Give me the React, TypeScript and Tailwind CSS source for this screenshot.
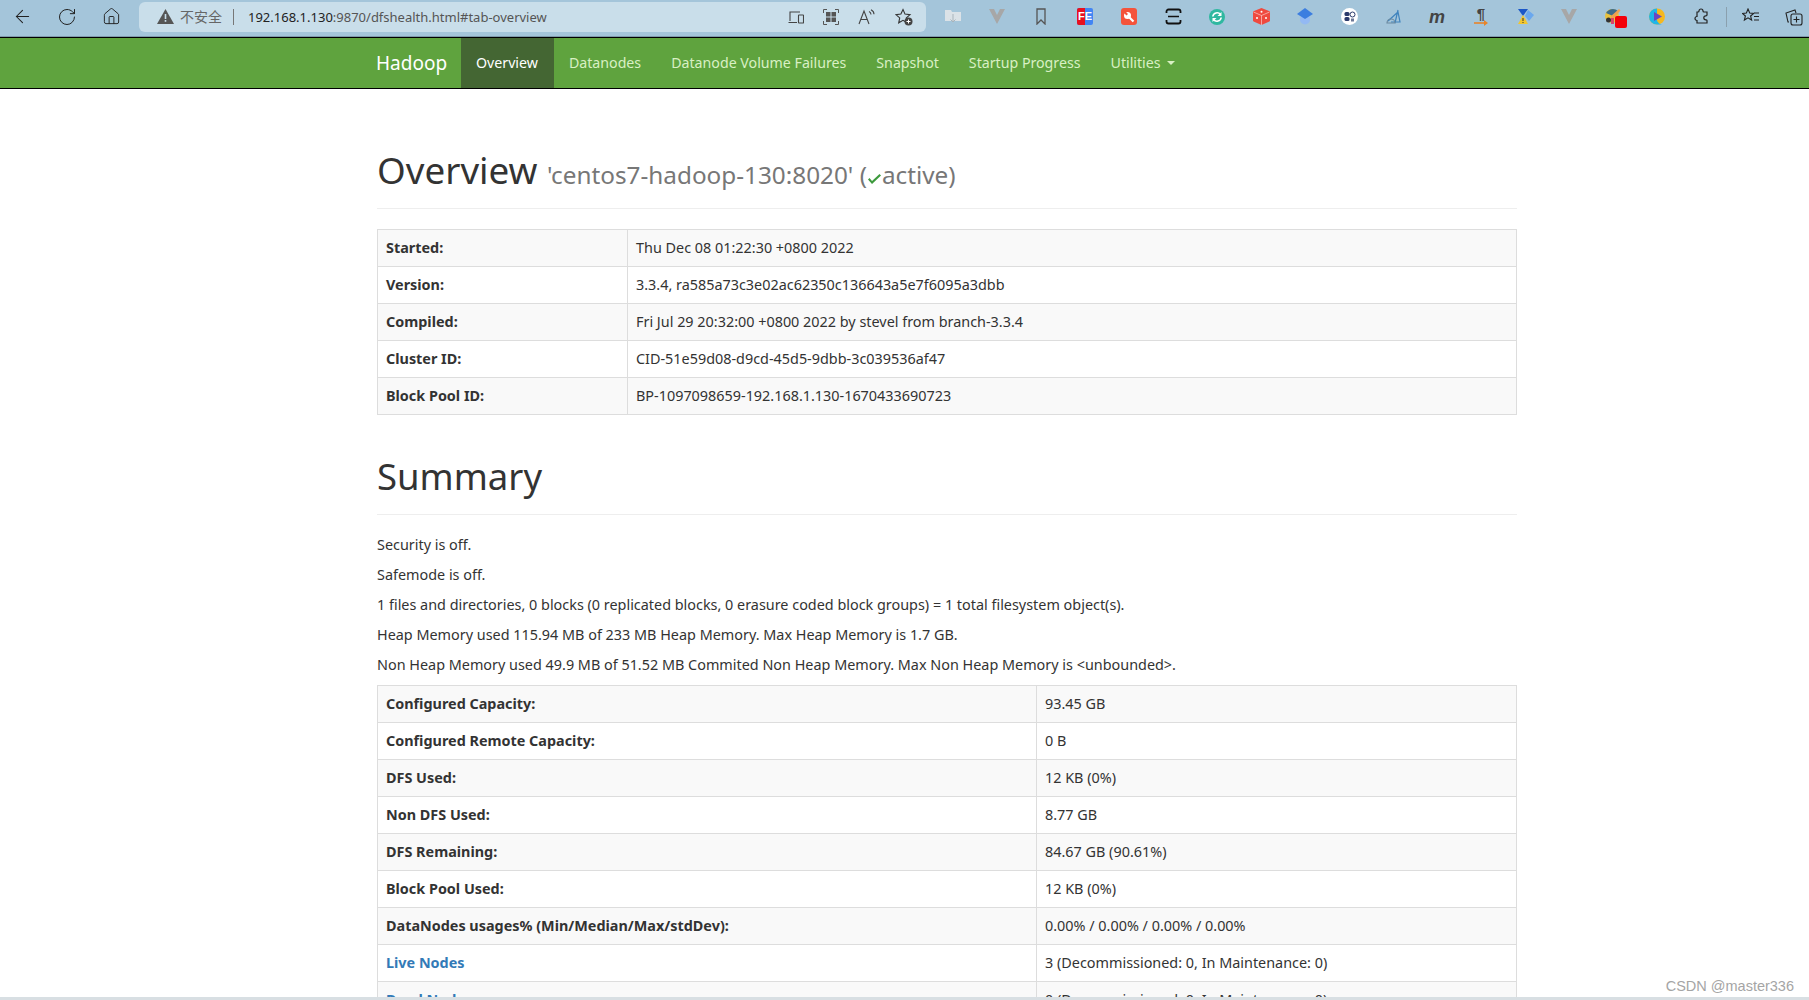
import { ArrowLeft, RotateCw, Home } from "lucide-react";

const overviewRows = [
  ["Started:", "Thu Dec 08 01:22:30 +0800 2022"],
  ["Version:", "3.3.4, ra585a73c3e02ac62350c136643a5e7f6095a3dbb"],
  ["Compiled:", "Fri Jul 29 20:32:00 +0800 2022 by stevel from branch-3.3.4"],
  ["Cluster ID:", "CID-51e59d08-d9cd-45d5-9dbb-3c039536af47"],
  ["Block Pool ID:", "BP-1097098659-192.168.1.130-1670433690723"],
];

const summaryRows = [
  ["Configured Capacity:", "93.45 GB"],
  ["Configured Remote Capacity:", "0 B"],
  ["DFS Used:", "12 KB (0%)"],
  ["Non DFS Used:", "8.77 GB"],
  ["DFS Remaining:", "84.67 GB (90.61%)"],
  ["Block Pool Used:", "12 KB (0%)"],
  ["DataNodes usages% (Min/Median/Max/stdDev):", "0.00% / 0.00% / 0.00% / 0.00%"],
  ["Live Nodes", "3 (Decommissioned: 0, In Maintenance: 0)"],
  ["Dead Nodes", "0 (Decommissioned: 0, In Maintenance: 0)"],
];

const navItems = ["Datanodes", "Datanode Volume Failures", "Snapshot", "Startup Progress"];

function InfoTable({ rows, labelWidth }: { rows: string[][]; labelWidth: string }) {
  return (
    <table className="w-full table-fixed border-collapse border border-[#ddd]">
      <colgroup>
        <col className={labelWidth} />
        <col />
      </colgroup>
      <tbody>
        {rows.map(([label, value], i) => {
          const isLink = label.endsWith("Nodes");
          return (
            <tr key={label} className={i % 2 === 0 ? "bg-[#f9f9f9]" : "bg-white"}>
              <th className={`border border-[#ddd] p-2 text-left font-bold ${isLink ? "text-[#337ab7]" : ""}`}>{label}</th>
              <td className="border border-[#ddd] p-2">{value}</td>
            </tr>
          );
        })}
      </tbody>
    </table>
  );
}

// slots for extension icons, 44px apart like the browser toolbar
function Ext({ children }: { children?: React.ReactNode }) {
  return <div className="w-[44px] h-[22px] flex items-center justify-center shrink-0 relative">{children}</div>;
}

function Toolbar() {
  return (
    <div className="h-[37px] pb-[3px] bg-[#a4c5da] border-b border-[#7f9aab] flex items-center text-[#222]">
      <div className="w-[139px] flex items-center shrink-0 pl-[12px]">
        <ArrowLeft size={21} strokeWidth={1.2} />
        <RotateCw size={20} strokeWidth={1.2} className="ml-[24px]" />
        <Home size={19} strokeWidth={1.2} className="ml-[25px]" />
      </div>
      <div className="w-[787px] h-[30px] bg-[#c9deea] rounded-md flex items-center shrink-0 pl-[18px] text-[13px] font-['Noto_Sans','Noto_Sans_CJK_SC',sans-serif]">
        <svg width="17" height="15" viewBox="0 0 17 15">
          <path d="M8.500 0 L17 15 H0 Z" fill="#555" />
          <rect x="7.700" y="5" width="1.600" height="5" fill="#c9deea" />
          <rect x="7.700" y="11" width="1.600" height="1.800" fill="#c9deea" />
        </svg>
        <span className="ml-[6px] text-[14px] text-[#666]">不安全</span>
        <span className="ml-[11px] w-px h-[16px] bg-[#777]" />
        <span className="ml-[14px] text-[#222]">192.168.1.130</span>
        <span className="text-[#555]">:9870/dfshealth.html#tab-overview</span>
        <div className="ml-auto flex items-center gap-[19px] pr-[13px]">
          <svg width="16" height="14" viewBox="0 0 16 14" fill="none" stroke="#444" strokeWidth="1.100">
            <path d="M2 11V2h10M0.500 12.500H9" />
            <rect x="10.500" y="5" width="5" height="8" rx="0.500" />
          </svg>
          <svg width="16" height="16" viewBox="0 0 16 16">
            <path d="M.5 4V.5H4M12 .5h3.500V4M15.500 12v3.500H12M4 15.500H.5V12" fill="none" stroke="#555" />
            <path d="M3 3h4.500v4.500H3zM8.500 3H13v4.500H8.500zM3 8.500h4.500V13H3zM8.500 8.500H13V13H8.500z" fill="#555" />
          </svg>
          <svg width="18" height="16" viewBox="0 0 18 16" fill="none" stroke="#444" strokeWidth="1.100">
            <path d="M1 15 6 2l5 13M3 10.500h6M11 2.500c1.500 .7 2 1.600 2 3M13 .8c2 1 3 2.500 3 4.500" />
          </svg>
          <svg width="18" height="18" viewBox="0 0 18 18">
            <path d="M8 1.500l2 4.600 5 .5-3.700 3.300 1 4.900-4.300-2.500-4.300 2.500 1-4.900L.9 6.600l5-.5z" fill="none" stroke="#333" strokeWidth="1.100" />
            <circle cx="13.500" cy="13.500" r="4" fill="#444" />
            <path d="M13.500 11.500v4M11.500 13.500h4" stroke="#fff" />
          </svg>
        </div>
      </div>
      <div className="ml-[5px] flex items-center">
        <Ext>
          <svg width="16" height="15" viewBox="0 0 16 15">
            <path d="M0 1h6l1 2h9v9H0z" fill="#dbe2e7" />
            <path d="M8 5v8M5.500 10.500 8 13l2.500-2.500" stroke="#a9b4bb" fill="none" />
          </svg>
        </Ext>
        <Ext>
          <svg width="16" height="15" viewBox="0 0 16 15">
            <path d="M0 0h5l3 6 3-6h5L8 15z" fill="#a7a7a7" />
          </svg>
        </Ext>
        <Ext>
          <svg width="10" height="17" viewBox="0 0 10 17" fill="none" stroke="#555" strokeWidth="1.300">
            <path d="M1 1h8v15L5 12l-4 4z" />
          </svg>
        </Ext>
        <Ext>
          <div className="w-[16px] h-[17px] rounded-[2px] bg-[#4285f4] overflow-hidden relative">
            <div className="absolute left-0 top-0 bottom-0 w-[8px] bg-[#e8101f]" />
            <span className="absolute left-[1px] top-[3px] text-[11px] leading-[11px] font-bold text-white font-['Liberation_Sans',sans-serif]">FE</span>
          </div>
        </Ext>
        <Ext>
          <div className="w-[16px] h-[17px] rounded-[3px] bg-[#f4533b] flex items-center justify-center">
            <svg width="12" height="12" viewBox="0 0 12 12">
              <circle cx="4.500" cy="4.500" r="3.500" fill="#fff" />
              <path d="M4.500 4.500l6 6" stroke="#fff" strokeWidth="2.200" />
              <path d="M2 0 5 3 3.500 4.500.5 1.500z" fill="#f4533b" />
            </svg>
          </div>
        </Ext>
        <Ext>
          <svg width="17" height="17" viewBox="0 0 17 17" fill="none" stroke="#111" strokeWidth="1.800">
            <path d="M1.500 5V3.500a2 2 0 0 1 2-2h10a2 2 0 0 1 2 2V5M1.500 12v1.500a2 2 0 0 0 2 2h10a2 2 0 0 0 2-2V12" />
            <path d="M3 8.500h11" strokeWidth="1.500" />
          </svg>
        </Ext>
        <Ext>
          <svg width="16" height="16" viewBox="0 0 16 16">
            <circle cx="8" cy="8" r="8" fill="#2fb8a0" />
            <path d="M3.800 7.500A4.300 4.300 0 0 1 11.500 5.500M12.200 8.500A4.300 4.300 0 0 1 4.500 10.500" fill="none" stroke="#fff" strokeWidth="1.600" />
            <path d="M12.500 3v4h-4zM3.500 13V9h4z" fill="#fff" />
          </svg>
        </Ext>
        <Ext>
          <svg width="17" height="17" viewBox="0 0 17 17">
            <path d="M8.500 0 16 3a1 1 0 0 1 1 1v8.500a1 1 0 0 1-.6 .9L8.500 17 .6 13.400a1 1 0 0 1-.6-.9V4a1 1 0 0 1 1-1z" fill="#ef4a3f" />
            <path d="M8.500 7.500V17M.5 4l8 3.500 8-3.500" stroke="#fff" fill="none" strokeWidth="0.500" />
            <circle cx="8.500" cy="3.700" r="1" fill="#fff" />
            <circle cx="4" cy="10" r="1" fill="#fff" />
            <circle cx="13" cy="10" r="1" fill="#fff" />
          </svg>
        </Ext>
        <Ext>
          <svg width="16" height="17" viewBox="0 0 16 17">
            <circle cx="8" cy="11.500" r="5" fill="#93b9f3" />
            <path d="M8 0l8 6-8 5-8-5z" fill="#3b7de0" />
          </svg>
        </Ext>
        <Ext>
          <svg width="17" height="17" viewBox="0 0 17 17">
            <circle cx="8.500" cy="8.500" r="8.500" fill="#fff" />
            <rect x="3.500" y="4" width="5" height="4" rx="1.500" fill="#2b3a6b" />
            <rect x="3.500" y="9" width="5" height="4" rx="1.500" fill="#2b3a6b" />
            <circle cx="11.500" cy="6.500" r="2.500" fill="none" stroke="#2b3a6b" />
            <path d="M10 10.500h3v3h-3z" fill="#6b7796" />
          </svg>
        </Ext>
        <Ext>
          <svg width="15" height="16" viewBox="0 0 15 16" fill="none" stroke="#3f83bd" strokeWidth="1.200">
            <path d="M12 1 9 14M2 12 12 3l2 10H5" />
            <path d="M1 14a4 4 0 0 1 8 0z" stroke="#6b8aa0" />
          </svg>
        </Ext>
        <Ext>
          <span className="font-['Liberation_Sans',sans-serif] italic font-bold text-[18px] leading-none text-[#444]">m</span>
        </Ext>
        <Ext>
          <div className="flex flex-col items-center">
            <span className="font-['Liberation_Sans',sans-serif] font-bold text-[15px] leading-[13px] text-[#444]">¶</span>
            <svg width="14" height="6" viewBox="0 0 14 6">
              <path d="M0 3h11" stroke="#e8842a" strokeWidth="1.600" />
              <path d="M10 0l4 3-4 3z" fill="#e8842a" />
            </svg>
          </div>
        </Ext>
        <Ext>
          <svg width="17" height="17" viewBox="0 0 17 17">
            <path d="M1 1h10L6 8z" fill="#1b57c8" />
            <path d="M11 2l6 5-5 6-4-5z" fill="#6aa8ee" />
            <path d="M6 7l5 9H1z" fill="#f2c62e" />
            <path d="M6 10v3M6 14v1" stroke="#333" />
          </svg>
        </Ext>
        <Ext>
          <svg width="16" height="15" viewBox="0 0 16 15">
            <path d="M0 0h5l3 6 3-6h5L8 15z" fill="#a7a7a7" />
          </svg>
        </Ext>
        <Ext>
          <svg width="17" height="17" viewBox="0 0 17 17">
            <circle cx="7" cy="8" r="7" fill="#e9c23c" />
            <path d="M1 5c3-5 9-5 12-2L8 8z" fill="#3f6d8a" />
            <path d="M5 9l9-8 1.500 1.500L8 11z" fill="#f0a050" />
            <circle cx="3.500" cy="12" r="2.500" fill="#333" />
            <path d="M6 10h3v6H6z" fill="#d9446b" />
          </svg>
          <div className="absolute left-[24px] top-[10px] w-[12px] h-[12px] rounded-[2px] bg-[#f40009]" />
        </Ext>
        <Ext>
          <svg width="16" height="17" viewBox="0 0 16 17">
            <circle cx="8" cy="8.500" r="8" fill="#f5b81f" />
            <path d="M8 .5a8 8 0 0 0 0 16h5a6 6 0 0 1-5-8z" fill="#1fb6e8" />
            <path d="M5 4l8 4.500L5 13z" fill="#6b46c1" />
          </svg>
        </Ext>
        <Ext>
          <svg width="17" height="17" viewBox="0 0 17 17" fill="none" stroke="#222" strokeWidth="1.200">
            <path d="M6 3a2 2 0 1 1 4 0c0 .6 .4 1 1 1h3v3c0 .6-.6 .8-1.200 .8a2 2 0 0 0 0 4c.6 0 1.200 .2 1.200 .8V15H4v-2.500a2 2 0 1 1 0-4V4h1c.6 0 1-.4 1-1z" />
          </svg>
        </Ext>
        <div className="w-px h-[20px] bg-[#8aa0ae] shrink-0 ml-[3px]" />
        <div className="ml-[12px] w-[24px] flex justify-center">
          <svg width="18" height="17" viewBox="0 0 18 17" fill="none" stroke="#222" strokeWidth="1.100">
            <path d="M6 1l1.700 4 4 .4L8.600 8l1 4-3.600-2.200L2.400 12l1-4L.4 5.400l4-.4zM12 5h5M12 8.500h5M12 12h5" />
          </svg>
        </div>
        <div className="ml-[19px] w-[24px] flex justify-center">
          <svg width="18" height="18" viewBox="0 0 18 18" fill="none" stroke="#222" strokeWidth="1.100">
            <path d="M4 14H3l-2-9 9-3 1 3" />
            <rect x="6" y="6" width="11" height="11" rx="2" />
            <path d="M11.500 8.500v6M8.500 11.500h6" />
          </svg>
        </div>
      </div>
    </div>
  );
}

function Navbar() {
  return (
    <nav className="h-[52px] bg-[#5fa33e] border-y border-black pl-[376px] flex text-[14.2px] text-[#d9f0c4]">
      <a className="text-[19px] leading-[50px] text-white w-[85px] shrink-0">Hadoop</a>
      <a className="pl-[15px] pr-[16px] leading-[50px] bg-[#446633] text-white">Overview</a>
      {navItems.map((item) => (
        <a key={item} className="px-[15px] leading-[50px]">{item}</a>
      ))}
      <a className="px-[15px] leading-[50px] flex items-center gap-[6px]">
        Utilities
        <span className="w-0 h-0 border-x-4 border-x-transparent border-t-4 border-t-[#d9f0c4]" />
      </a>
    </nav>
  );
}

export default function App() {
  return (
    <div className="h-[1000px] overflow-hidden relative bg-white text-[14.4px] leading-[20px] text-[#333] font-['Noto_Sans','Noto_Sans_CJK_SC',sans-serif]">
      <Toolbar />
      <Navbar />
      <div className="ml-[377px] w-[1140px]">
        <div className="mt-[61px] h-[58px] border-b border-[#eee] box-content leading-[40px] text-[36.8px] font-normal">
          Overview{" "}
          <small className="text-[24.3px] text-[#777]">
            'centos7-hadoop-130:8020' (
            <svg width="15" height="12" viewBox="0 0 15 12" className="inline align-[-1px]">
              <path d="M1 6.500 5 11 14 2.500 12.500 1 5 8 2.500 5z" fill="#3c9a3c" />
            </svg>
            active)
          </small>
        </div>
        <div className="mt-[20px]">
          <InfoTable rows={overviewRows} labelWidth="w-[250px]" />
        </div>
        <h1 className="mt-[41px] pb-[18px] border-b border-[#eee] leading-[40px] text-[36.5px]">Summary</h1>
        <div className="mt-[20px] flex flex-col gap-[10px]">
          <p>Security is off.</p>
          <p>Safemode is off.</p>
          <p>1 files and directories, 0 blocks (0 replicated blocks, 0 erasure coded block groups) = 1 total filesystem object(s).</p>
          <p>Heap Memory used 115.94 MB of 233 MB Heap Memory. Max Heap Memory is 1.7 GB.</p>
          <p>Non Heap Memory used 49.9 MB of 51.52 MB Commited Non Heap Memory. Max Non Heap Memory is &lt;unbounded&gt;.</p>
        </div>
        <div className="mt-[10px]">
          <InfoTable rows={summaryRows} labelWidth="w-[659px]" />
        </div>
      </div>
      <div className="absolute left-0 right-0 bottom-0 h-[3px] bg-[#d8dfe3]" />
      <div className="absolute right-[15px] bottom-[4px] text-[14.5px] text-[#a5a5a5] font-['Liberation_Sans',sans-serif]">CSDN @master336</div>
    </div>
  );
}
